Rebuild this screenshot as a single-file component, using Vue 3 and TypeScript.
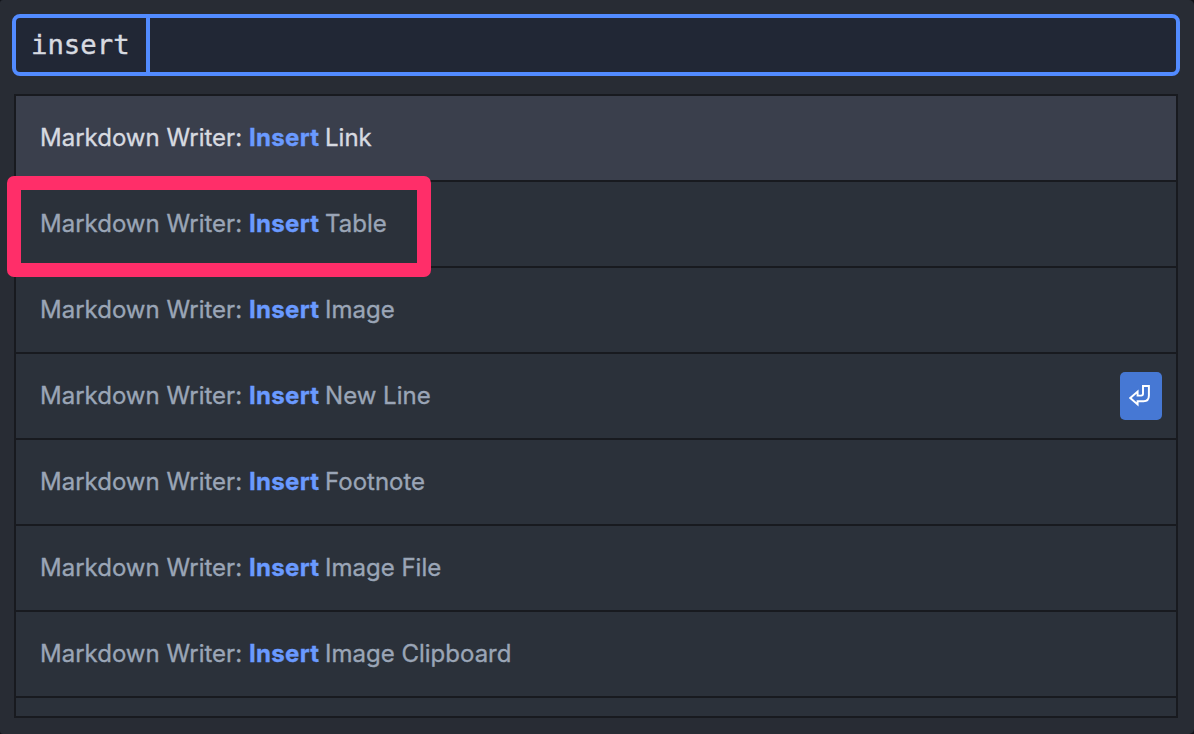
<script setup lang="ts">
import { ref } from 'vue'

interface Command {
  name: string
  key?: boolean
  outlined?: boolean
}

const query = 'insert'
const selected = ref(0)
const commands: Command[] = [
  { name: 'Link' },
  { name: 'Table', outlined: true },
  { name: 'Image' },
  { name: 'New Line', key: true },
  { name: 'Footnote' },
  { name: 'Image File' },
  { name: 'Image Clipboard' },
]
</script>

<template>
  <main class="palette">
    <div class="search"><span class="query">{{ query }}</span><span class="caret"></span></div>
    <ul class="list">
      <li v-for="(c, i) in commands" :key="c.name" class="row" :class="{ selected: i === selected }" @click="selected = i">
        <span class="label"><span class="prefix">Markdown Writer:</span><b>Insert</b><span class="name">{{ c.name }}</span></span>
        <kbd v-if="c.key" class="key">
          <svg width="24" height="24" viewBox="0 0 24 24"><path d="M14 1.9H19.9V11.5Q19.9 17.2 14.6 17.2H8.6V20.4L1.3 14L8.6 7.6V11.6H12.2Q14 11.6 14 9.8Z" fill="none" stroke="#fff" stroke-width="1.95" /></svg>
        </kbd>
        <span v-if="c.outlined" class="highlight"></span>
      </li>
      <li class="rest"></li>
    </ul>
  </main>
</template>

<style>
body { margin: 0; background: #111318; }
</style>

<style scoped>
.palette { box-sizing: border-box; height: 734px; padding: 14px 14px 0 12px; background: #282c34; border-radius: 3px 5px 5px 3px; font-family: Inter, sans-serif; }
.search { box-sizing: border-box; height: 62px; border: 4px solid #528bff; border-radius: 8px; background: #212735; display: flex; width: 1168px; }
.query { width: 115px; padding-left: 15px; font: 27.3px/54px "DejaVu Sans Mono", monospace; color: #d7dae0; -webkit-text-stroke: 0.4px #d7dae0; }
.caret { width: 4px; background: #528bff; }
.list { box-sizing: border-box; list-style: none; margin: 18px 0 0 2px; padding: 0; width: 1164px; height: 624px; border: 2px solid #181a1f; background: #2b313a; }
.row { position: relative; box-sizing: border-box; height: 86px; border-bottom: 2px solid #181a1f; padding: 0 14px 0 24px; display: flex; align-items: center; justify-content: space-between; background: #2b313a; color: #9aa5b6; font-size: 24px; }
.rest { height: 18px; background: #2b313a; }
.selected { background: #3a3f4c; color: #d7dae0; }
.label { display: flex; white-space: pre; margin-bottom: 2px; -webkit-text-stroke: 0.35px currentColor; }
.label b { width: 70px; margin: 0 6px 0 7px; color: #6a9aff; letter-spacing: 0.3px; }
.key { width: 42px; height: 48px; background: #4678d4; border-radius: 5px; display: flex; align-items: center; justify-content: center; }
.highlight { position: absolute; z-index: 1; left: -9px; top: -6px; box-sizing: border-box; width: 424px; height: 101px; border: 14px solid #ff2e69; border-radius: 7px; }
</style>
